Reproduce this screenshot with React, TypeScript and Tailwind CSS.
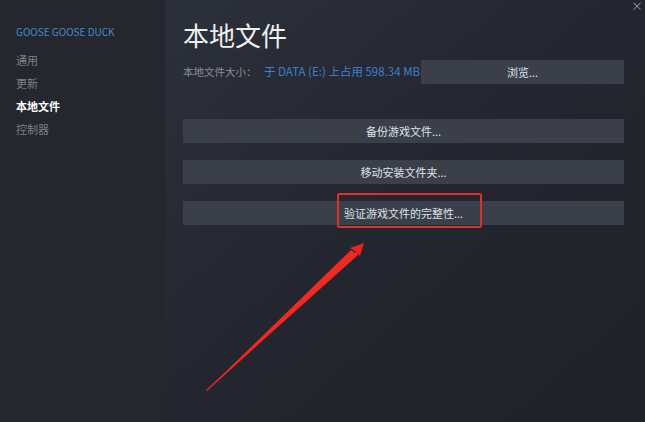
import React from "react";

const font = { fontFamily: '"Noto Sans CJK SC", "Noto Sans", sans-serif' };

function Btn({ children, className = "" }: { children: React.ReactNode; className?: string }) {
  return (
    <div className={`h-[24px] bg-[#3a3f4a] flex items-center justify-center text-[11px] text-[#dfe3e8] ${className}`}>
      {children}
    </div>
  );
}

export default function App() {
  return (
    <div style={font} className="w-[645px] h-[422px] flex overflow-hidden relative">
      <div className="w-[165px] h-full bg-[#24272d] flex flex-col pt-[25px] pl-[16px]">
        <div className="text-[10px] text-[#4b87c9] leading-[14px]">GOOSE GOOSE DUCK</div>
        <div className="mt-[13px] flex flex-col gap-[7px] text-[11px] leading-[16px]">
          <div className="text-[#7b808a]">通用</div>
          <div className="text-[#7b808a]">更新</div>
          <div className="text-white font-bold">本地文件</div>
          <div className="text-[#7b808a]">控制器</div>
        </div>
      </div>
      <div className="flex-1 h-full bg-gradient-to-br from-[#2c303a] via-[#23262e] to-[#1f2228] pl-[18px] pr-[21px] pt-[16px]">
        <div className="text-[26px] leading-[38px] text-[#eef0f2]">本地文件</div>
        <div className="mt-[6px] flex items-center h-[24px]">
          <div className="text-[10.5px] text-[#8a8f98] w-[81px] whitespace-nowrap">本地文件大小：</div>
          <div className="text-[11.5px] text-[#3f7ed0] w-[157px] whitespace-nowrap">于 DATA (E:) 上占用 598.34 MB</div>
          <Btn className="flex-1">浏览...</Btn>
        </div>
        <div className="mt-[35px] flex flex-col gap-[17px]">
          <Btn>备份游戏文件...</Btn>
          <Btn>移动安装文件夹...</Btn>
          <Btn>验证游戏文件的完整性...</Btn>
        </div>
      </div>
      <div className="absolute left-[337px] top-[193px] w-[145px] h-[35px] border-2 border-[#d6322f] rounded-[2px]" />
      <svg className="absolute left-0 top-0" width="645" height="422">
        <polygon points="206,390 356,252 350,248 364,243 360,256 358,254 207,391" fill="#e8231f" />
        <polygon points="207,390 351,250 358,255" fill="#f02a22" />
      </svg>
      <div className="absolute right-[2px] top-0 text-[12px] leading-[12px] text-[#8c9099]">×</div>
    </div>
  );
}
